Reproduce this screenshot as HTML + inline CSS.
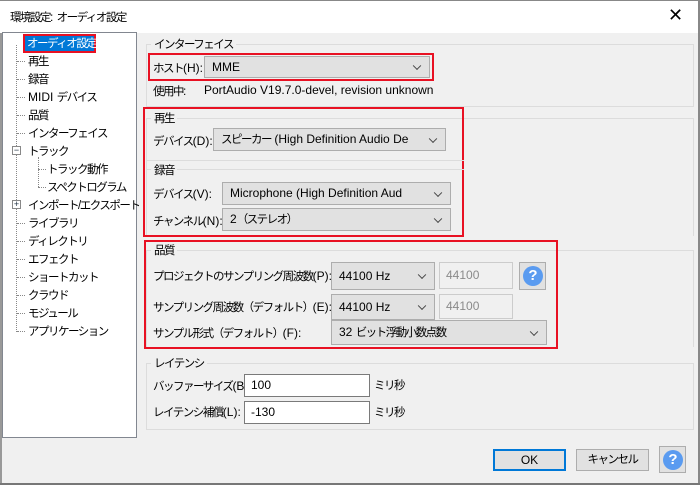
<!DOCTYPE html>
<html><head><meta charset="utf-8"><style>
*{box-sizing:border-box;margin:0;padding:0}
body{width:700px;height:485px;background:#f0f0f0;font-family:"Liberation Sans","Noto Sans CJK JP",sans-serif;font-size:12px;color:#000;position:relative;overflow:hidden}
j{font-size:11.5px;letter-spacing:-1.5px}
.a{position:absolute;white-space:nowrap}
.grp{position:absolute;border:1px solid #dcdcdc}
.gl{position:absolute;background:#f0f0f0;padding:0 3px;line-height:14px}
.red{position:absolute;border:2px solid #e81123}
.cb{position:absolute;background:#e1e1e1;border:1px solid #adadad;padding-left:7px;line-height:20px;white-space:nowrap}
.cb::after{content:"";position:absolute;right:9px;top:50%;width:5px;height:5px;border-right:1px solid #444;border-bottom:1px solid #444;transform:translateY(-70%) rotate(45deg)}
.tx{position:absolute;background:#fff;border:1px solid #7a7a7a;padding-left:6px;line-height:20px}
.dis{position:absolute;background:#f0f0f0;border:1px solid #ccc;color:#8a8a8a;padding-left:6px;line-height:20px}
.hb{position:absolute;border:1px solid #adadad;background:#e1e1e1}
.hb span{position:absolute;left:3px;top:3px;width:20px;height:20px;border-radius:50%;background:#5a9bf0;color:#fff;font-weight:bold;font-size:15px;text-align:center;line-height:20px}
.btn{position:absolute;background:#e1e1e1;border:1px solid #adadad;text-align:center;line-height:19px}
.ti{position:absolute;left:28px;line-height:16px;white-space:nowrap}
.dh{position:absolute;border-top:1px dotted #888;width:8px}
</style></head><body>
<div class="a" style="left:0;top:0;width:700px;height:33px;background:#fff;border-top:1px solid #888;border-right:1px solid #888"></div>
<div class="a" style="left:10px;top:9px"><j>環境設定</j>: <j>オーディオ設定</j></div>
<div class="a" style="left:668px;top:5px;font-size:18px;font-weight:300">✕</div>
<div class="a" style="left:698px;top:0;width:2px;height:485px;background:#888"></div>
<div class="a" style="left:0;top:483px;width:700px;height:2px;background:#777"></div>
<div class="a" style="left:0;top:33px;width:2px;height:450px;background:#999"></div>

<!-- tree -->
<div class="a" style="left:2px;top:32px;width:135px;height:406px;background:#fff;border:1px solid #828790"></div>
<div class="a" style="left:16px;top:45px;height:287px;border-left:1px dotted #888"></div>
<div class="a" style="left:23px;top:34px;width:73px;height:19px;border:2px solid #e81123"></div>
<div class="a" style="left:25px;top:36px;width:69px;height:15px;background:#0078d7;color:#fff;line-height:15px;padding-left:2px"><j>オーディオ設定</j></div>
<div class="dh" style="left:17px;top:61px"></div><div class="ti" style="top:53px"><j>再生</j></div>
<div class="dh" style="left:17px;top:79px"></div><div class="ti" style="top:71px"><j>録音</j></div>
<div class="dh" style="left:17px;top:97px"></div><div class="ti" style="top:89px">MIDI <j>デバイス</j></div>
<div class="dh" style="left:17px;top:115px"></div><div class="ti" style="top:107px"><j>品質</j></div>
<div class="dh" style="left:17px;top:133px"></div><div class="ti" style="top:125px"><j>インターフェイス</j></div>
<div class="a" style="left:12px;top:146px;width:9px;height:9px;border:1px solid #888;background:#fff;font-size:9px;line-height:7px;text-align:center;color:#234">−</div>
<div class="ti" style="top:143px"><j>トラック</j></div>
<div class="a" style="left:38px;top:157px;height:30px;border-left:1px dotted #888"></div>
<div class="dh" style="left:38px;top:169px"></div><div class="ti" style="top:161px;left:47px"><j>トラック動作</j></div>
<div class="dh" style="left:38px;top:187px"></div><div class="ti" style="top:179px;left:47px"><j>スペクトログラム</j></div>
<div class="a" style="left:12px;top:200px;width:9px;height:9px;border:1px solid #888;background:#fff;font-size:9px;line-height:7px;text-align:center;color:#234">+</div>
<div class="ti" style="top:197px"><j>インポート/エクスポート</j></div>
<div class="dh" style="left:17px;top:223px"></div><div class="ti" style="top:215px"><j>ライブラリ</j></div>
<div class="dh" style="left:17px;top:241px"></div><div class="ti" style="top:233px"><j>ディレクトリ</j></div>
<div class="dh" style="left:17px;top:259px"></div><div class="ti" style="top:251px"><j>エフェクト</j></div>
<div class="dh" style="left:17px;top:277px"></div><div class="ti" style="top:269px"><j>ショートカット</j></div>
<div class="dh" style="left:17px;top:295px"></div><div class="ti" style="top:287px"><j>クラウド</j></div>
<div class="dh" style="left:17px;top:313px"></div><div class="ti" style="top:305px"><j>モジュール</j></div>
<div class="dh" style="left:17px;top:331px"></div><div class="ti" style="top:323px"><j>アプリケーション</j></div>

<!-- interface -->
<div class="grp" style="left:146px;top:44px;width:548px;height:63px"></div>
<div class="gl" style="left:151px;top:37px"><j>インターフェイス</j></div>
<div class="red" style="left:148px;top:53px;width:286px;height:28px"></div>
<div class="a" style="left:153px;top:60px"><j>ホスト</j>(H):</div>
<div class="cb" style="left:204px;top:56px;width:226px;height:22px">MME</div>
<div class="a" style="left:153px;top:83px"><j>使用中</j>:</div>
<div class="a" style="left:204px;top:83px">PortAudio V19.7.0-devel, revision unknown</div>

<!-- playback/record -->
<div class="grp" style="left:146px;top:118px;width:548px;height:118px;border-bottom:none"></div>
<div class="gl" style="left:151px;top:111px"><j>再生</j></div>
<div class="red" style="left:143px;top:107px;width:321px;height:130px"></div>
<div class="a" style="left:153px;top:133px"><j>デバイス</j>(D):</div>
<div class="cb" style="left:213px;top:128px;width:233px;height:23px"><j>スピーカー</j> (High Definition Audio De</div>
<div class="a" style="left:146px;top:160px;width:318px;border-top:1px solid #dcdcdc"></div>
<div class="a" style="left:146px;top:169px;width:318px;border-top:1px solid #dcdcdc"></div>
<div class="gl" style="left:151px;top:163px"><j>録音</j></div>
<div class="a" style="left:153px;top:186px"><j>デバイス</j>(V):</div>
<div class="cb" style="left:222px;top:182px;width:229px;height:23px">Microphone (High Definition Aud</div>
<div class="a" style="left:153px;top:213px"><j>チャンネル</j>(N):</div>
<div class="cb" style="left:222px;top:208px;width:229px;height:23px">2<j>（ステレオ）</j></div>

<!-- quality -->
<div class="grp" style="left:146px;top:250px;width:548px;height:97px;border-bottom:none"></div>
<div class="gl" style="left:151px;top:243px"><j>品質</j></div>
<div class="red" style="left:144px;top:240px;width:414px;height:109px"></div>
<div class="a" style="left:153px;top:268px"><j>プロジェクトのサンプリング周波数</j>(P):</div>
<div class="cb" style="left:331px;top:262px;width:104px;height:28px;line-height:26px">44100 Hz</div>
<div class="dis" style="left:439px;top:262px;width:74px;height:27px;line-height:24px">44100</div>
<div class="hb" style="left:519px;top:262px;width:27px;height:28px"><span>?</span></div>
<div class="a" style="left:153px;top:299px"><j>サンプリング周波数（デフォルト）</j>(E):</div>
<div class="cb" style="left:331px;top:294px;width:104px;height:26px;line-height:24px">44100 Hz</div>
<div class="dis" style="left:439px;top:294px;width:74px;height:25px;line-height:22px">44100</div>
<div class="a" style="left:153px;top:325px"><j>サンプル形式（デフォルト）</j>(F):</div>
<div class="cb" style="left:331px;top:320px;width:216px;height:25px;line-height:23px">32 <j>ビット浮動小数点数</j></div>

<!-- latency -->
<div class="grp" style="left:146px;top:363px;width:548px;height:67px"></div>
<div class="gl" style="left:151px;top:356px"><j>レイテンシ</j></div>
<div class="a" style="left:153px;top:378px"><j>バッファーサイズ</j>(B):</div>
<div class="tx" style="left:244px;top:374px;width:126px;height:23px">100</div>
<div class="a" style="left:374px;top:377px"><j>ミリ秒</j></div>
<div class="a" style="left:153px;top:404px"><j>レイテンシ補償</j>(L):</div>
<div class="tx" style="left:244px;top:401px;width:126px;height:23px">-130</div>
<div class="a" style="left:374px;top:404px"><j>ミリ秒</j></div>

<!-- buttons -->
<div class="btn" style="left:493px;top:449px;width:73px;height:22px;border:2px solid #0078d7;line-height:18px">OK</div>
<div class="btn" style="left:576px;top:449px;width:73px;height:22px"><j>キャンセル</j></div>
<div class="hb" style="left:659px;top:446px;width:27px;height:27px"><span>?</span></div>
</body></html>
